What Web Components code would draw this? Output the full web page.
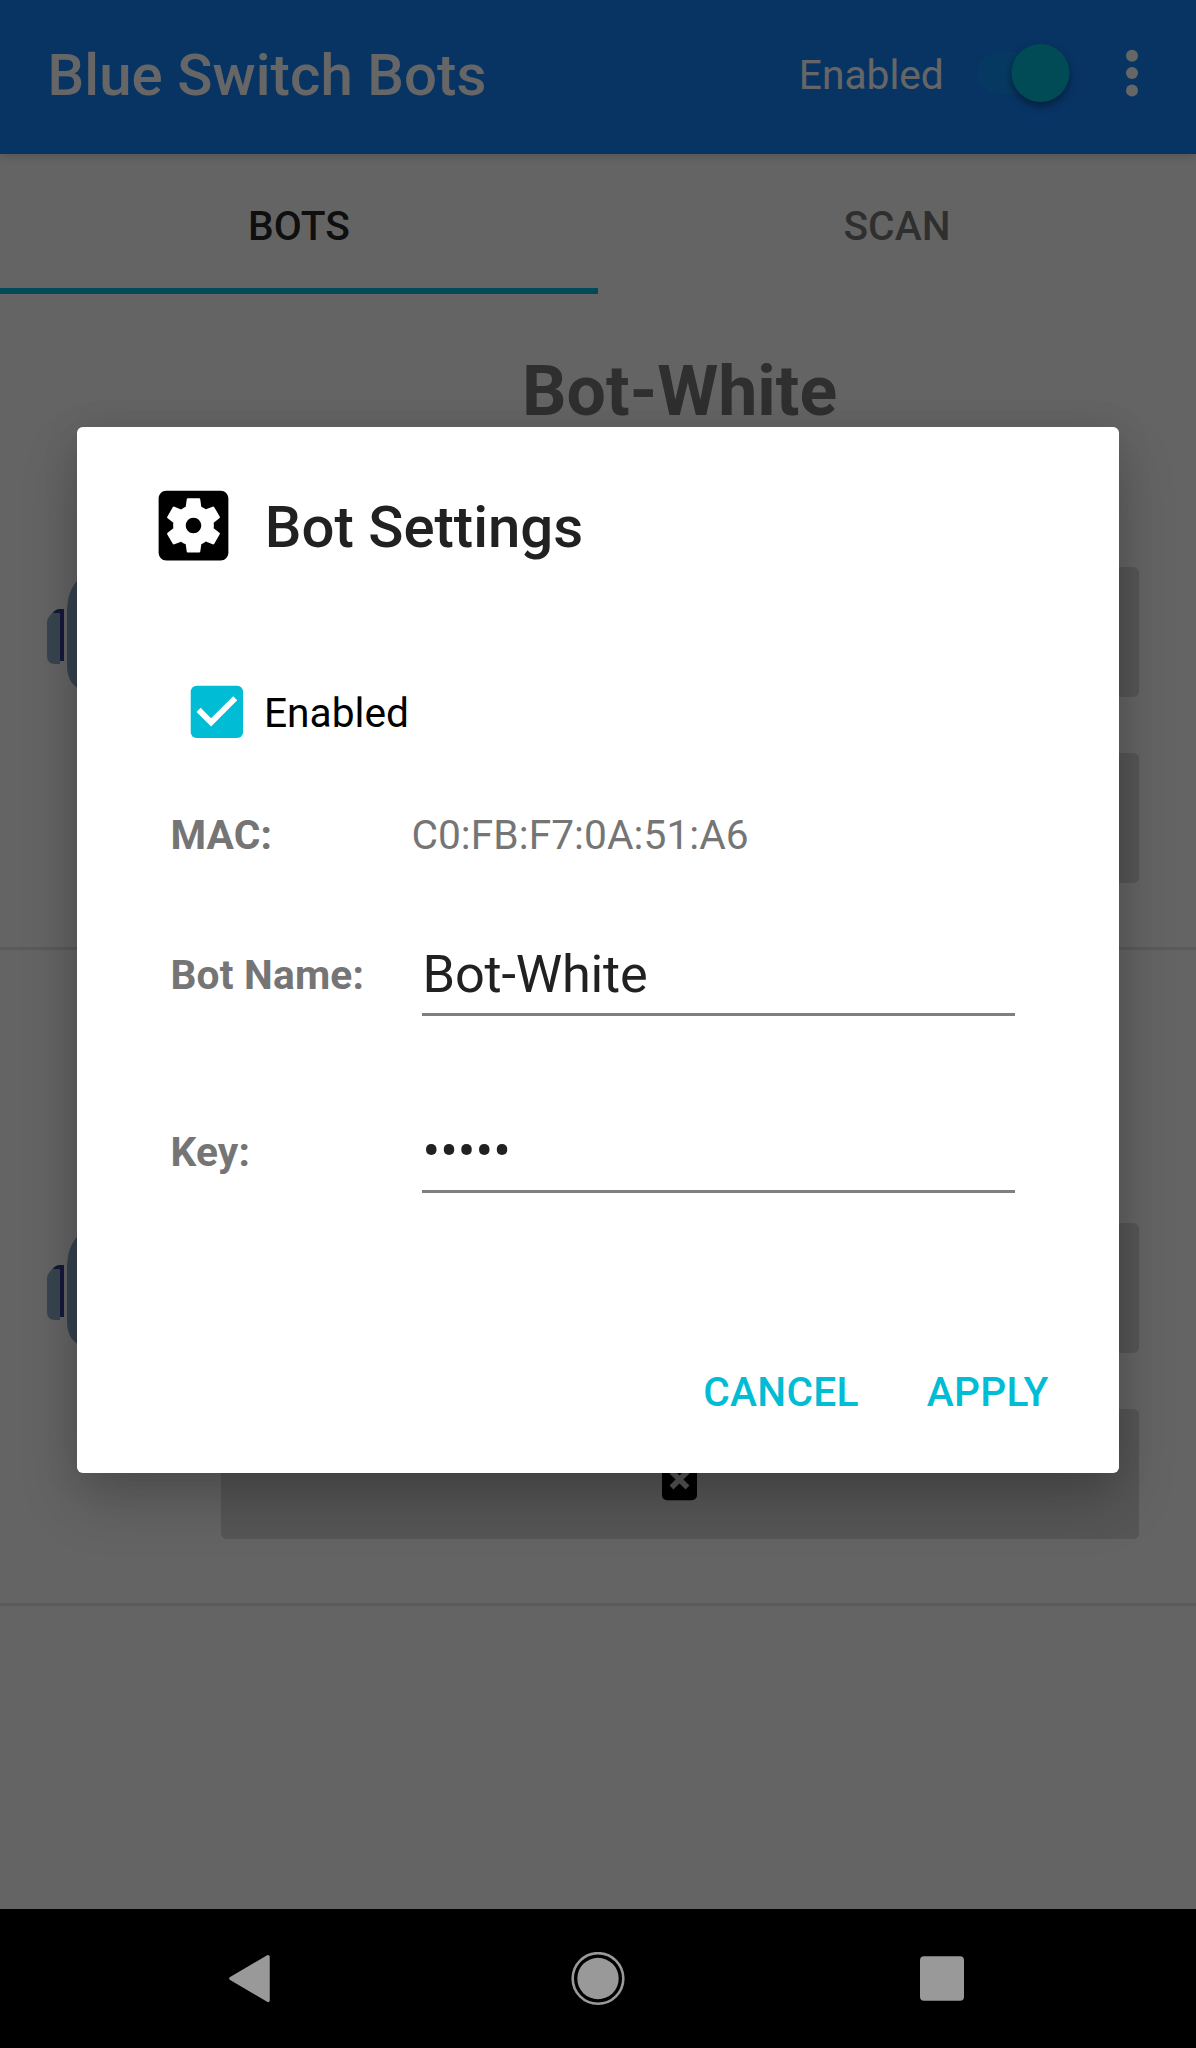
<!DOCTYPE html>
<html lang="en">
<head>
<meta charset="utf-8">
<title>Blue Switch Bots</title>
<style>
  html, body { margin: 0; }
  body { width: 1196px; height: 2048px; overflow: hidden; background: #fafafa; font-family: Roboto, "Liberation Sans", sans-serif; font-size: 40.7px; line-height: 48px; }
</style>
</head>
<body>
<phone-screen>
  <app-bar slot="bar" label="Enabled">Blue Switch Bots</app-bar>
  <tab-strip slot="tabs">
    <tab-item active>BOTS</tab-item>
    <tab-item>SCAN</tab-item>
  </tab-strip>
  <bot-row>Bot-White</bot-row>
  <bot-row></bot-row>
  <settings-dialog slot="dialog" heading="Bot Settings">
    <check-option>Enabled</check-option>
    <form-row label="MAC:">C0:FB:F7:0A:51:A6</form-row>
    <form-row class="name" label="Bot Name:" field>Bot-White</form-row>
    <form-row label="Key:" field>•••••</form-row>
    <flat-button slot="actions">CANCEL</flat-button>
    <flat-button slot="actions">APPLY</flat-button>
  </settings-dialog>
  <nav-bar slot="nav"></nav-bar>
</phone-screen>

<script>
const define = (name, render) => customElements.define(name, class extends HTMLElement {
  constructor() {
    super();
    this.attachShadow({ mode: 'open' });
  }
  connectedCallback() {
    this.shadowRoot.innerHTML = '<style>*{box-sizing:border-box}</style>' + render(this);
  }
});

define('phone-screen', () => `
<style>
  :host { display: flex; flex-direction: column; width: 1196px; height: 2048px; position: relative; }
  main { flex: 1; display: flex; flex-direction: column; overflow: hidden; }
  .scrim { position: absolute; inset: 0 0 139.4px 0; background: rgba(0,0,0,.6); z-index: 2; overflow: hidden; }
</style>
<slot name="bar"></slot>
<slot name="tabs"></slot>
<main><slot></slot></main>
<slot name="nav"></slot>
<div class="scrim"><slot name="dialog"></slot></div>`);

define('app-bar', el => `
<style>
  :host { display: flex; align-items: flex-start; height: 154.3px; background: #1482fa; color: #fff; position: relative; z-index: 1; box-shadow: 0 2px 10px rgba(0,0,0,.18); }
  .title { flex: 1; padding: 41px 0 0 47.5px; font-size: 58.1px; line-height: 68px; font-weight: 500; letter-spacing: .08px; white-space: nowrap; }
  .label { padding-top: 50.5px; }
  svg { display: block; flex: none; overflow: visible; }
  .switch { margin: 38px 0 0 34px; }
  .more { margin: 43px 57.7px 0 55.5px; }
  .thumb { filter: drop-shadow(0 4px 4px rgba(0,0,0,.4)); }
</style>
<span class="title"><slot></slot></span>
<span class="label">${el.getAttribute('label')}</span>
<svg class="switch" width="93" height="70" viewBox="0 0 93 70">
  <rect x="0" y="14" width="84" height="41.6" rx="20.8" fill="#00bcd4" fill-opacity=".2"/>
  <circle class="thumb" cx="62.5" cy="35" r="29" fill="#00bcd4"/>
</svg>
<svg class="more" width="12" height="60" viewBox="0 0 12 60" fill="#fff">
  <circle cx="6" cy="12.7" r="6"/><circle cx="6" cy="30" r="6"/><circle cx="6" cy="47.6" r="6"/>
</svg>`);

define('tab-strip', () => `
<style>:host { display: flex; height: 140px; }</style>
<slot></slot>`);

define('tab-item', el => `
<style>
  :host { flex: 1; display: flex; justify-content: center; padding-top: 48px; font-weight: 500; box-sizing: border-box; color: rgba(0,0,0,.54); }
  :host([active]) { color: rgba(0,0,0,.87); border-bottom: 6px solid #00bcd4; }
</style>
<span><slot></slot></span>`);

define('bot-row', () => `
<style>
  :host { display: flex; flex: none; height: 655.7px; box-sizing: border-box; border-bottom: 3px solid #e1e1e1; }
  .picture { width: 220.6px; flex: none; padding: 278px 0 0 47px; }
  svg { display: block; }
  .content { width: 918px; display: flex; flex-direction: column; }
  .name { height: 273px; padding-top: 56px; text-align: center; font-size: 69.8px; line-height: 82px; font-weight: 700; color: #757575; }
  .button { height: 129.7px; border-radius: 6px; background: #d6d6d6; display: flex; justify-content: center; align-items: flex-start; padding-top: 56px; }
  .button + .button { margin-top: 56.3px; }
</style>
<div class="picture">
  <svg width="130" height="120" viewBox="0 0 130 120">
    <path d="M20 42C20 24 24 16 30.5 8C36 1 42 -4 52 -4H110V122H44C38 121 34 119 30.500 116C24 112 20 104 20 94Z" fill="#86a6c6"/>
    <path d="M4 43Q8 37 12 37H17V89H12V42H4Z" fill="#373f96"/>
    <path d="M0 51Q0 45 6 41H13V92H8Q0 92 0 84Z" fill="#8cacc6"/>
  </svg>
</div>
<div class="content">
  <div class="name"><slot></slot></div>
  <div class="button"></div>
  <div class="button">
    <svg width="35" height="36" viewBox="0 0 35 36">
      <rect width="35" height="35.3" rx="5" fill="#000"/>
      <path d="M9.500 6.500L25.500 22.500M25.500 6.500L9.500 22.500" stroke="#d6d6d6" stroke-width="5.500"/>
    </svg>
  </div>
</div>`);

define('settings-dialog', el => `
<style>
  :host { position: absolute; left: 77.4px; top: 426.7px; width: 1041.3px; height: 1045.9px; display: flex; flex-direction: column; box-sizing: border-box; background: #fff; border-radius: 5.8px; box-shadow: 0 28px 58px rgba(0,0,0,.2), 0 4px 36px rgba(0,0,0,.1); }
  header { display: flex; height: 246px; padding: 52px 0 0 69.6px; }
  svg { display: block; flex: none; }
  h1 { margin: 14.5px 0 0 24.8px; font-size: 58.1px; line-height: 68px; font-weight: 500; color: #212121; }
  .body { flex: 1; }
  footer { display: flex; justify-content: flex-end; gap: 68px; padding: 0 70px 57px 0; }
</style>
<header>
  <svg width="93" height="93" viewBox="0 0 24 24"><path d="M12 10c-1.1 0-2 .9-2 2s.9 2 2 2 2-.9 2-2-.9-2-2-2zm7-7H5c-1.11 0-2 .9-2 2v14c0 1.1.89 2 2 2h14c1.11 0 2-.9 2-2V5c0-1.1-.89-2-2-2zm-1.75 9c0 .23-.02.46-.05.68l1.48 1.16c.13.11.17.3.08.45l-1.4 2.42c-.09.15-.27.21-.43.15l-1.74-.7c-.36.28-.76.51-1.18.69l-.26 1.85c-.03.17-.18.3-.35.3h-2.8c-.17 0-.32-.13-.35-.29l-.26-1.85c-.43-.18-.82-.41-1.18-.69l-1.74.7c-.16.06-.34 0-.43-.15l-1.4-2.42c-.09-.15-.05-.34.08-.45l1.48-1.16c-.03-.23-.05-.46-.05-.69 0-.23.02-.46.05-.68l-1.48-1.16c-.13-.11-.17-.3-.08-.45l1.4-2.42c.09-.15.27-.21.43-.15l1.74.7c.36-.28.76-.51 1.18-.69l.26-1.85c.03-.17.18-.3.35-.3h2.8c.17 0 .32.13.35.29l.26 1.85c.43.18.82.41 1.18.69l1.74-.7c.16-.06.34 0 .43.15l1.4 2.42c.09.15.05.34-.08.45l-1.48 1.16c.03.23.05.46.05.69z"/></svg>
  <h1>${el.getAttribute('heading')}</h1>
</header>
<div class="body"><slot></slot></div>
<footer><slot name="actions"></slot></footer>`);

define('check-option', () => `
<style>
  :host { display: flex; height: 120px; padding: 4px 0 0 105px; box-sizing: border-box; color: #000; }
  svg { display: block; flex: none; }
  span { padding: 12.5px 0 0 11.8px; }
</style>
<svg width="69.8" height="69.8" viewBox="0 0 24 24">
  <rect x="3" y="3" width="18" height="18" rx="2" fill="#00bcd4"/>
  <path d="M10 17l-5-5 1.41-1.41L10 14.17l7.59-7.59L19 8l-9 9z" fill="#fff"/>
</svg>
<span><slot></slot></span>`);

define('form-row', el => `
<style>
  :host { display: flex; box-sizing: border-box; padding-left: 93px; height: 136px; color: #757575; }
  :host([field]) { height: 177px; }
  .label { width: 241px; flex: none; font-weight: 700; letter-spacing: .2px; padding-top: 18.5px; }
  .value { padding-top: 18.5px; letter-spacing: .06px; }
  :host([field]) .label { padding-top: 22.5px; }
  :host([field]) .value { margin-left: 10.2px; width: 593.2px; height: 87px; padding: 15px 0 0 1px; font-size: 52.3px; line-height: 61px; color: #212121; border-bottom: 3px solid #7f7f7f; letter-spacing: 0; }
  :host(.name) .value { letter-spacing: -.2px; }
</style>
<span class="label">${el.getAttribute('label')}</span>
<span class="value"><slot></slot></span>`);

define('flat-button', () => `
<style>:host { display: block; color: #00bcd4; font-weight: 500; letter-spacing: .25px; }</style>
<slot></slot>`);

define('nav-bar', () => `
<style>
  :host { display: flex; height: 139.4px; background: #000; align-items: flex-start; padding: 43.4px 0 0 229px; box-sizing: border-box; }
  svg { display: block; flex: none; }
  .home { margin-left: 300px; }
  .recent { margin-left: 295.4px; }
</style>
<svg width="42" height="54" viewBox="0 0 42 54"><path d="M39 4.7L2 26.500L39 48.300Z" fill="#999" stroke="#999" stroke-width="3.500" stroke-linejoin="round"/></svg>
<svg class="home" width="54" height="54" viewBox="0 0 54 54"><circle cx="27" cy="26.5" r="25.3" fill="none" stroke="#999" stroke-width="2.6"/><circle cx="27" cy="26.5" r="20.7" fill="#999"/></svg>
<svg class="recent" width="44" height="54" viewBox="0 0 44 54"><rect y="4.2" width="44" height="44.5" rx="4" fill="#999"/></svg>`);
</script>
</body>
</html>
